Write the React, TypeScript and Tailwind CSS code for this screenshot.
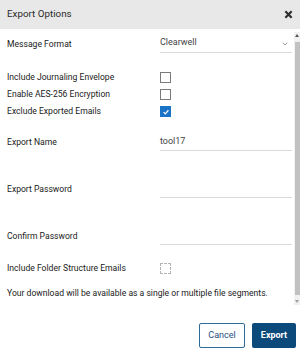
import { ChevronDown } from "lucide-react";

const font = { fontFamily: "Roboto, 'Liberation Sans', sans-serif" };

function Row({ label, className = "", children }: { label: string; className?: string; children?: React.ReactNode }) {
  return (
    <div className={`flex items-center h-[17px] ${className}`}>
      <div className="w-[153px] shrink-0 text-[8.6px] text-[#1a1a1a]">{label}</div>
      <div className="flex-1 h-full flex items-center">{children}</div>
    </div>
  );
}

function Box({ checked = false, dashed = false }: { checked?: boolean; dashed?: boolean }) {
  if (checked) {
    return (
      <div className="w-[11px] h-[11px] bg-[#1a73c6] flex items-center justify-center">
        <svg viewBox="0 0 10 10" className="w-[8px] h-[8px]">
          <path d="M2 5.2 L4.2 7.3 L8 2.8" fill="none" stroke="white" strokeWidth="1.6" />
        </svg>
      </div>
    );
  }
  return (
    <div
      className={`w-[11px] h-[11px] bg-white border ${dashed ? "border-dashed border-[#b5b5b5]" : "border-[#7a7a7a]"}`}
    />
  );
}

function Field({ value = "" }: { value?: string }) {
  return (
    <div className="w-[132px] h-full border-b border-[#d9d9d9] text-[9px] text-[#444] leading-[15px]">
      {value}
    </div>
  );
}

export default function App() {
  return (
    <div className="w-[300px] h-[352px] bg-white flex flex-col overflow-hidden" style={font}>
      <header className="h-[29px] shrink-0 bg-[#e8e8e8] flex items-center justify-between pl-[7px] pr-[7px]">
        <h1 className="text-[9.8px] text-[#2b2b2b]">Export Options</h1>
        <svg viewBox="0 0 10 10" className="w-[9px] h-[9px]">
          <path d="M1.5 1.5 L8.5 8.5 M8.5 1.5 L1.5 8.5" stroke="#2e2e2e" strokeWidth="2.4" />
        </svg>
      </header>

      <div className="flex h-[279px] shrink-0">
        <div className="flex-1 pl-[7px] pt-[7px]">
          <Row label="Message Format">
            <div className="w-[132px] h-full border-b border-[#d9d9d9] flex items-center justify-between text-[9px] text-[#444]">
              <span className="-mt-[2px]">Clearwell</span>
              <ChevronDown className="w-[8px] h-[8px] text-[#555] mr-[3px]" strokeWidth={1.8} />
            </div>
          </Row>

          <Row label="Include Journaling Envelope" className="mt-[16px]">
            <Box />
          </Row>
          <Row label="Enable AES-256 Encryption">
            <Box />
          </Row>
          <Row label="Exclude Exported Emails">
            <Box checked />
          </Row>

          <Row label="Export Name" className="mt-[14px]">
            <Field value="tool17" />
          </Row>
          <Row label="Export Password" className="mt-[30px]">
            <Field />
          </Row>
          <Row label="Confirm Password" className="mt-[30px]">
            <Field />
          </Row>

          <Row label="Include Folder Structure Emails" className="mt-[15px]">
            <Box dashed />
          </Row>

          <p className="mt-[8px] h-[16px] leading-[16px] text-[8.6px] text-[#1a1a1a]">
            Your download will be available as a single or multiple file segments.
          </p>
        </div>

        <div className="w-[6px] mt-[3px] mb-[3px] bg-[#f1f1f1] flex flex-col items-center">
          <div className="h-[10px] flex items-start justify-center pt-[2px]">
            <div className="w-0 h-0 border-l-[2px] border-r-[2px] border-b-[3px] border-l-transparent border-r-transparent border-b-[#555]" />
          </div>
          <div className="w-[5px] flex-1 bg-[#c1c1c1]" />
          <div className="h-[10px] flex items-end justify-center pb-[2px]">
            <div className="w-0 h-0 border-l-[2px] border-r-[2px] border-t-[3px] border-l-transparent border-r-transparent border-t-[#a0a0a0]" />
          </div>
        </div>
      </div>

      <footer className="flex justify-end gap-[7px] pr-[4px] pt-[15px]">
        <button className="w-[46px] h-[25px] border border-[#2c6a99] rounded-[2px] text-[9px] text-[#1f4f7f] bg-white">
          Cancel
        </button>
        <button className="w-[44px] h-[25px] rounded-[2px] bg-[#0c4a7b] text-[9px] font-bold text-white">
          Export
        </button>
      </footer>
    </div>
  );
}
